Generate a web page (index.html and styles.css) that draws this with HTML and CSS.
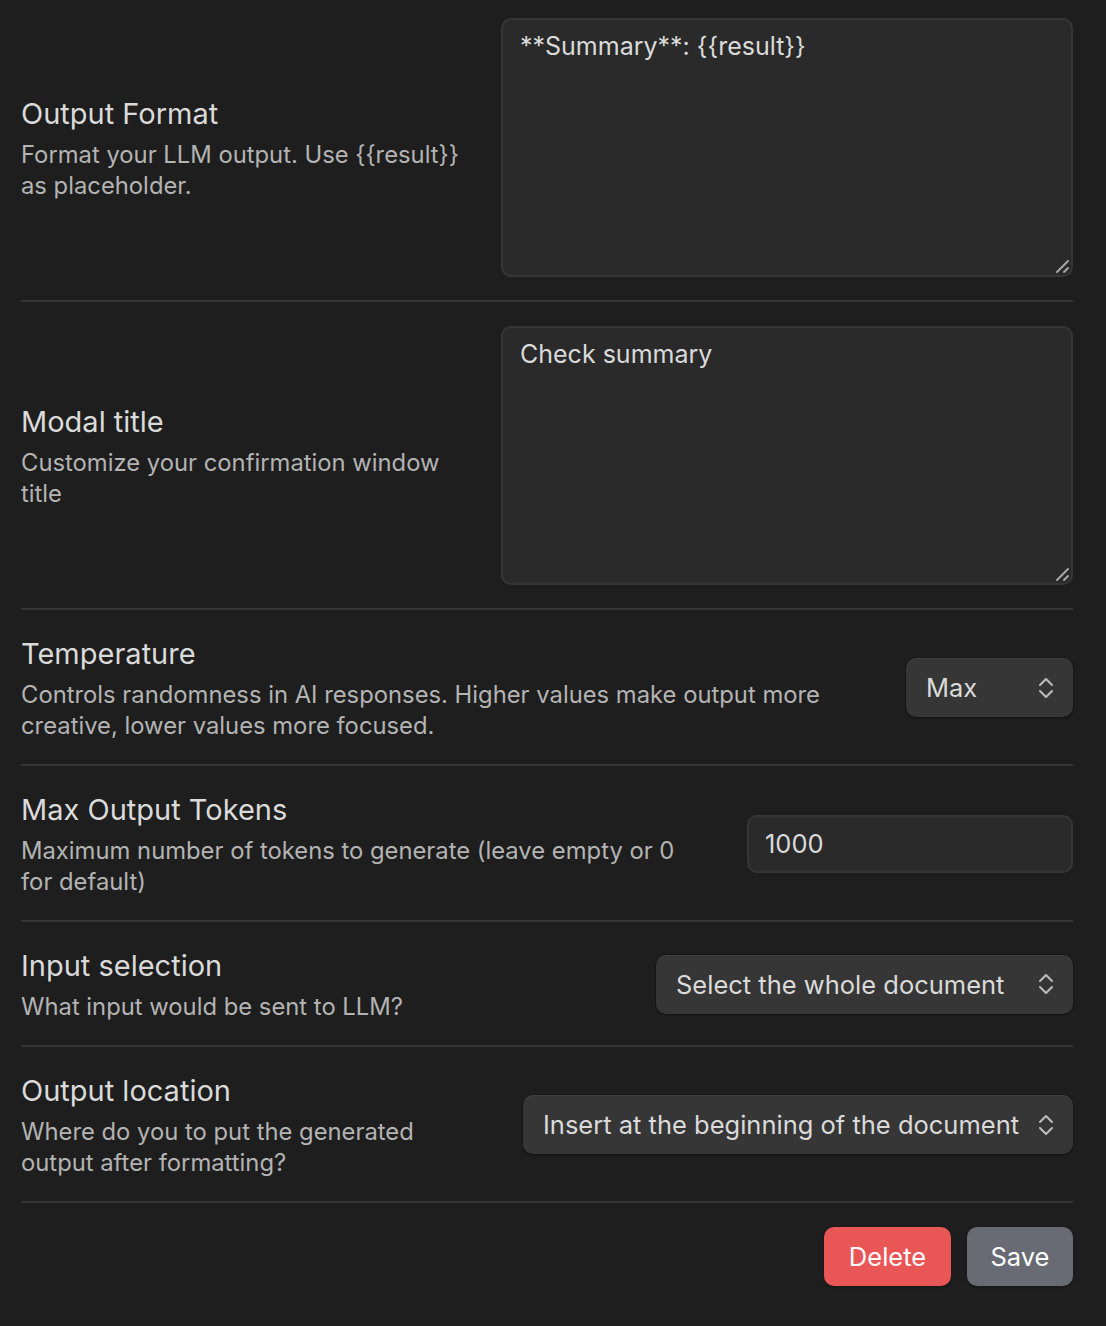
FILE: index.html
```html
<!DOCTYPE html>
<html lang="en">
<head>
<meta charset="utf-8">
<title>Command settings</title>
<link rel="stylesheet" href="styles.css">
</head>
<body>
<div class="settings">
  <div class="setting-item setting-first">
    <div class="setting-info">
      <div class="setting-name">Output Format</div>
      <div class="setting-desc">Format your LLM output. Use {{result}} as placeholder.</div>
    </div>
    <div class="setting-control">
      <div class="textarea-wrap">
        <textarea class="text-area">**Summary**: {{result}}</textarea>
        <svg class="grip" width="16" height="16" viewBox="0 0 16 16" fill="none" stroke="#a8a8a8" stroke-width="2" stroke-linecap="round"><path d="M3 14 L14 3"/><path d="M10 14 L14 10"/></svg>
      </div>
    </div>
  </div>

  <div class="setting-item">
    <div class="setting-info">
      <div class="setting-name">Modal title</div>
      <div class="setting-desc">Customize your confirmation window title</div>
    </div>
    <div class="setting-control">
      <div class="textarea-wrap">
        <textarea class="text-area">Check summary</textarea>
        <svg class="grip" width="16" height="16" viewBox="0 0 16 16" fill="none" stroke="#a8a8a8" stroke-width="2" stroke-linecap="round"><path d="M3 14 L14 3"/><path d="M10 14 L14 10"/></svg>
      </div>
    </div>
  </div>

  <div class="setting-item">
    <div class="setting-info">
      <div class="setting-name">Temperature</div>
      <div class="setting-desc">Controls randomness in AI responses. Higher values make output more creative, lower values more focused.</div>
    </div>
    <div class="setting-control">
      <div class="dropdown-wrap">
        <select class="dropdown dropdown-temp">
          <option>Max</option>
        </select>
        <svg class="dropdown-icon" width="16" height="24" viewBox="0 0 16 24" fill="none" stroke="#bdbdbd" stroke-width="2" stroke-linecap="round" stroke-linejoin="round"><path d="M2 9 L8 3 L14 9"/><path d="M2 15 L8 21 L14 15"/></svg>
      </div>
    </div>
  </div>

  <div class="setting-item">
    <div class="setting-info">
      <div class="setting-name">Max Output Tokens</div>
      <div class="setting-desc">Maximum number of tokens to generate (leave empty or 0 for default)</div>
    </div>
    <div class="setting-control">
      <input class="text-input" type="text" value="1000">
    </div>
  </div>

  <div class="setting-item">
    <div class="setting-info">
      <div class="setting-name">Input selection</div>
      <div class="setting-desc">What input would be sent to LLM?</div>
    </div>
    <div class="setting-control">
      <div class="dropdown-wrap">
        <select class="dropdown dropdown-input">
          <option>Select the whole document</option>
        </select>
        <svg class="dropdown-icon" width="16" height="24" viewBox="0 0 16 24" fill="none" stroke="#bdbdbd" stroke-width="2" stroke-linecap="round" stroke-linejoin="round"><path d="M2 9 L8 3 L14 9"/><path d="M2 15 L8 21 L14 15"/></svg>
      </div>
    </div>
  </div>

  <div class="setting-item">
    <div class="setting-info">
      <div class="setting-name">Output location</div>
      <div class="setting-desc">Where do you to put the generated output after formatting?</div>
    </div>
    <div class="setting-control">
      <div class="dropdown-wrap">
        <select class="dropdown dropdown-location">
          <option>Insert at the beginning of the document</option>
        </select>
        <svg class="dropdown-icon" width="16" height="24" viewBox="0 0 16 24" fill="none" stroke="#bdbdbd" stroke-width="2" stroke-linecap="round" stroke-linejoin="round"><path d="M2 9 L8 3 L14 9"/><path d="M2 15 L8 21 L14 15"/></svg>
      </div>
    </div>
  </div>

  <div class="button-row">
    <button class="btn btn-warning">Delete</button>
    <button class="btn btn-save">Save</button>
  </div>
</div>
</body>
</html>
```

FILE: styles.css
```css
html, body {
  margin: 0;
  padding: 0;
  background: #1e1e1e;
  color-scheme: dark;
}

body {
  font-family: Inter, "Liberation Sans", sans-serif;
  color: #dadada;
}

.settings {
  width: 1052px;
  padding: 0 33px 40px 21px;
}

.setting-item {
  display: flex;
  align-items: center;
  border-top: 2px solid #363636;
  padding: 24px 0 23px;
}

.setting-first {
  border-top: none;
  padding-top: 18px;
}

.setting-info {
  flex: 1 1 auto;
  min-width: 0;
  margin-right: 38px;
}

.setting-name {
  font-size: 29px;
  line-height: 39px;
  color: #dadada;
}

.setting-desc {
  font-size: 23.8px;
  line-height: 31px;
  color: #b3b3b3;
  margin-top: 6px;
}

.setting-control {
  flex: 0 0 auto;
  display: flex;
  justify-content: flex-end;
}

.textarea-wrap {
  position: relative;
  display: flex;
}

.text-area {
  box-sizing: border-box;
  width: 572px;
  height: 259px;
  margin: 0;
  background: #2a2a2a;
  border: 2px solid #363636;
  border-radius: 10px;
  padding: 10px 17px;
  font-family: Inter, "Liberation Sans", sans-serif;
  font-size: 25px;
  line-height: 33px;
  color: #dadada;
  resize: none;
  outline: none;
}

.grip {
  position: absolute;
  right: 3px;
  bottom: 3px;
  pointer-events: none;
}

.text-input {
  box-sizing: border-box;
  width: 326px;
  height: 58px;
  margin: 0;
  background: #2a2a2a;
  border: 2px solid #363636;
  border-radius: 10px;
  padding: 0 16px;
  font-family: Inter, "Liberation Sans", sans-serif;
  font-size: 25.5px;
  color: #dadada;
  outline: none;
}

.dropdown-wrap {
  position: relative;
  display: inline-block;
}

.dropdown {
  -webkit-appearance: none;
  appearance: none;
  box-sizing: border-box;
  height: 59px;
  margin: 0;
  padding: 0 50px 0 20px;
  background: #363636;
  border: none;
  border-radius: 10px;
  box-shadow: 0 1px 2px rgba(0, 0, 0, 0.35), 0 0 0 1px rgba(0, 0, 0, 0.15), inset 0 1px 0 rgba(255, 255, 255, 0.05);
  font-family: Inter, "Liberation Sans", sans-serif;
  font-size: 25.5px;
  color: #dadada;
  outline: none;
}

.dropdown-temp {
  width: 167px;
}

.dropdown-input {
  width: 417px;
}

.dropdown-location {
  width: 550px;
}

.dropdown-icon {
  position: absolute;
  right: 19px;
  top: 50%;
  margin-top: -12px;
  pointer-events: none;
}

.button-row {
  display: flex;
  justify-content: flex-end;
  gap: 16px;
  border-top: 2px solid #363636;
  padding-top: 24px;
}

.btn {
  height: 59px;
  border: none;
  border-radius: 10px;
  padding: 0;
  font-family: Inter, "Liberation Sans", sans-serif;
  font-size: 25.5px;
  color: #ffffff;
  box-shadow: 0 1px 3px rgba(0, 0, 0, 0.3);
}

.btn-warning {
  width: 127px;
  background: #e95656;
}

.btn-save {
  width: 106px;
  background: #686b73;
}
```
